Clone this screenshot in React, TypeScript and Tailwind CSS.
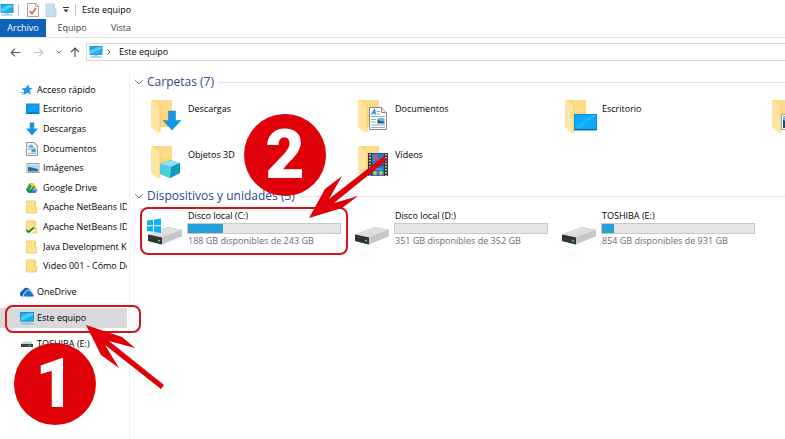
import type { ReactNode } from "react";

type IconProps = { className?: string };

const Monitor = ({ className = "" }: IconProps) => (
  <svg viewBox="0 0 14 13" className={`shrink-0 ${className}`} aria-hidden="true">
    <rect x="0.5" y="0.5" width="13" height="8.6" fill="#12b5f3" stroke="#2a8dc0" />
    <path d="M1 9V5L9 1h4v2z" fill="#4fd0fb" />
    <path d="M5 10h4v1H5z" fill="#9fc5d8" />
    <path d="M1 11.2h12v1.3H1z" fill="#7db9d8" />
  </svg>
);

const PageIcon = () => (
  <svg viewBox="0 0 12 14" className="h-3.5 w-3" aria-hidden="true">
    <path d="M.5.5h8l3 3v10H.5z" fill="#fff" stroke="#a5a5a5" />
    <path d="M8.500.5v3h3" fill="none" stroke="#a5a5a5" />
    <path d="M2.500 8l2.500 2.500L9 5" fill="none" stroke="#ee5a1f" strokeWidth="1.600" />
  </svg>
);

const NewFolder = () => (
  <svg viewBox="0 0 11 14" className="h-3.5 w-3" aria-hidden="true">
    <path d="M.5 1h8v5h2v7.500H.5z" fill="#c6e0f0" stroke="#b4d3e6" />
    <path d="M8.500 1v5" stroke="#a8cade" />
  </svg>
);

const Star = () => (
  <svg viewBox="0 0 12 12" className="size-3" aria-hidden="true">
    <path d="M7.500.5l.8 3.300 3.500.2-3 2.100 1 4.400-3.400-1.800L2.600 11l.6-3.700L.8 4.600l3.600-.5z" fill="#1c9bea" />
    <path d="M0 8.500h3M1 10.300h2" stroke="#6cc0f3" />
  </svg>
);

const Desk = () => (
  <svg viewBox="0 0 14 11" className="h-3 w-3.5" aria-hidden="true">
    <rect x=".5" y=".5" width="12.500" height="9.500" fill="#0c9df0" stroke="#1685cd" />
    <path d="M2 8l8-6" stroke="#27b0fa" />
    <path d="M1 9.500h12" stroke="#0669aa" />
  </svg>
);

const Down = () => (
  <svg viewBox="0 0 12 13" className="h-3.5 w-3" aria-hidden="true">
    <path d="M3.800 0h4.400v6H12l-6 7-6-7h3.800z" fill="#1593e6" />
  </svg>
);

const Doc = () => (
  <svg viewBox="0 0 11 13" className="h-3.5 w-3" aria-hidden="true">
    <path d="M.5.5h7l3 3v9H.5z" fill="#fff" stroke="#909598" />
    <path d="M2 5.500h7M2 7h2M2 10.500h7" stroke="#8aa4b3" />
    <path d="M3 3h3M2.500 4.300h4" stroke="#27a2db" />
    <path d="M5 6.500h4v3H5z" fill="#3fa3d0" />
  </svg>
);

const Picture = () => (
  <svg viewBox="0 0 13 10" className="h-2.5 w-3.5" aria-hidden="true">
    <rect x=".5" y=".5" width="12" height="9" fill="#fff" stroke="#9aa3a9" />
    <path d="M1.500 1.500h10v4h-10z" fill="#a9daf4" />
    <path d="M1.500 4l4 .5 6 1.500v2.500h-10z" fill="#226694" />
    <path d="M2 7h8" stroke="#2b8e7b" />
  </svg>
);

const Drive = () => (
  <svg viewBox="0 0 12 11" className="size-3" aria-hidden="true">
    <path d="M3.500 .5h4L11.500 7H7.500z" fill="#f9c82c" />
    <path d="M3.500 .5L0 7l2 3L6 4.500z" fill="#2fa35b" />
    <path d="M4 7h7.800L9.500 10.500H2z" fill="#3a7ee8" />
    <path d="M1 7l2.500 2.500L8.500 4" fill="none" stroke="#128a2c" strokeWidth="1.600" />
  </svg>
);

const MiniFolder = ({ checked = false }: { checked?: boolean }) => (
  <svg viewBox="0 0 12 13" className="h-3.5 w-3" aria-hidden="true">
    <path d="M.5.5h8.500v6.500h1.500v5.500H.5z" fill="#ffe28a" stroke="#f5cf68" />
    <path d="M9 1v6" stroke="#efc04f" />
    {checked && <path d="M0 9l3 3 5-4.500" fill="none" stroke="#fff" strokeWidth="3" />}
    {checked && <path d="M0 9l2.700 2.500L8 7" fill="none" stroke="#12852a" strokeWidth="1.700" />}
  </svg>
);

const Cloud = () => (
  <svg viewBox="0 0 14 10" className="h-2.5 w-3.5" aria-hidden="true">
    <path d="M3 9.500A2.500 2.500 0 0 1 1 5a2.500 2.500 0 0 1 2-2 3.500 3.500 0 0 1 6-1 3.500 3.500 0 0 1 2 2z" fill="#0c61b8" />
    <path d="M5.500 10A2 2 0 0 1 5 6a3.300 3.300 0 0 1 6-1.500A2.500 2.500 0 0 1 13 7a1.600 1.600 0 0 1-.3 3z" fill="#0f76d3" stroke="#fff" strokeWidth=".8" />
  </svg>
);

const MiniDisk = () => (
  <svg viewBox="0 0 12 7" className="h-2 w-3" aria-hidden="true">
    <path d="M2 1h8l2 2.500H0z" fill="#cfcfcf" />
    <path d="M0 3.500h12V6.500H0z" fill="#3c4140" />
    <path d="M7 5h3" stroke="#42b157" />
  </svg>
);

const Pin = () => (
  <svg viewBox="0 0 9 9" className="size-2.5 shrink-0" aria-hidden="true">
    <path d="M5 .3L8.700 4l-1 .7-.9-.2-1.600 1.700.1 1.600-.8.5L.8 4.600l.7-.7 1.500.1 1.800-1.700-.3-1z" fill="#8b979f" />
    <path d="M2.700 6.200L.3 8.700" stroke="#8b979f" />
  </svg>
);

const Chevron = () => (
  <svg viewBox="0 0 10 6" className="h-1.5 w-2.5" aria-hidden="true">
    <path d="M1 1l4 4 4-4" fill="none" stroke="#75808a" />
  </svg>
);

/* Open folder shared by every large tile; the badge is drawn over its lower right corner. */
const Folder = ({ children }: { children?: ReactNode }) => (
  <svg viewBox="0 0 34 36" className="h-9 w-[34px] shrink-0" aria-hidden="true">
    <path d="M1 2h20v27H8z" fill="#fbd578" />
    <path d="M8 2h13v12H9z" fill="#fddc88" />
    <path d="M0 2l9 5v27l-2 1-7-6z" fill="#ffe5a0" />
    <path d="M9 7v27" stroke="#eec568" strokeWidth=".8" />
    {children}
  </svg>
);

const DownBadge = <path d="M17.500 13h7v9.500H30l-9 9.500-9-9.500h5.500z" fill="#1796e8" stroke="#0f80cc" strokeWidth=".5" />;

const DocBadge = (
  <g>
    <path d="M11.500 9.500h12l5 5v17h-17z" fill="#fff" stroke="#85898c" />
    <path d="M23.500 9.500v5h5" fill="#e8ecee" stroke="#85898c" />
    <path d="M13.500 16.500l3-5 1 5M14.500 15h3" fill="none" stroke="#169ddd" strokeWidth="1.300" />
    <path d="M19 13.500h3M19 16h3M13 18.500h14M13 21.500h5M13 24h5M13 27h14M13 29.500h14" stroke="#8daebf" />
    <path d="M19.500 20h7v5h-7z" fill="#65bce4" />
    <path d="M19.500 22l7 2v1.500h-7z" fill="#275a77" />
  </g>
);

const DeskBadge = (
  <g>
    <rect x="9.500" y="16.500" width="22" height="15.500" fill="#0da9fa" stroke="#0b8ad2" />
    <path d="M10 29L26 17h5L14 31z" fill="#18b6ff" />
    <path d="M9.500 31.500h22" stroke="#06639e" />
  </g>
);

const CubeBadge = (
  <g>
    <path d="M9 20l10-4 10 3v10l-10 5-10-4z" fill="#20b8d6" />
    <path d="M9 20l10-4 10 3-9 4z" fill="#91e2ee" />
    <path d="M20 23l9-4v10l-10 5z" fill="#0f98bb" />
    <path d="M9 20l11 3-1 11-10-4z" fill="#4dccdf" />
  </g>
);

const FilmBadge = (
  <g>
    <path d="M10 9h20v23H10z" fill="#30373c" />
    <path d="M14 9.500h12v11H14zM14 21.500h12V32H14z" fill="#247bd3" />
    <path d="M12 10v22M28 10v22" stroke="#e5eaec" strokeWidth="1.500" strokeDasharray="1.500 1.500" />
    <path d="M15 17l3-5 2 5M21 19l4-5" stroke="#e8543b" strokeWidth="1.500" fill="none" />
    <circle cx="17" cy="29" r="2" fill="#f0b62c" />
    <circle cx="23" cy="29" r="2" fill="#f0b62c" />
    <path d="M15 25h9" stroke="#43c9ea" />
  </g>
);

const PhotoBadge = (
  <g>
    <rect x="9.500" y="16.500" width="23" height="15" fill="#fff" stroke="#9da5aa" />
    <path d="M11 18h20v12H11z" fill="#6dbce8" />
    <path d="M11 22l20 5v3H11z" fill="#174e76" />
  </g>
);

const Disk = ({ windows = false }: { windows?: boolean }) => (
  <svg viewBox="0 0 36 28" className="mt-2 h-7 w-9 shrink-0" aria-hidden="true">
    <path d="M1 16.500L21 9l14 3v6L14 26.500 1 23z" fill="#a9abac" />
    <path d="M1 16.500L21 9l14 3-20 7.500z" fill="#dedfe0" />
    <path d="M1 16.500l14 3v7L1 23z" fill="#303435" />
    <path d="M15 19.500L35 12v6l-20 8.500z" fill="#c6c7c9" />
    <path d="M11 22.500l2 .5" stroke="#2fe34c" strokeWidth="1.500" />
    {windows && <path d="M0 2.500l6-.8v5.500H0zM7 1.500l7-1v6.700H7zM0 8.200h6v5.500l-6-.7zM7 8.200h7v6.700l-7-1z" fill="#0ab5ee" />}
  </svg>
);

const quickAccess = [
  { label: "Escritorio", icon: <Desk />, pinned: true },
  { label: "Descargas", icon: <Down />, pinned: true },
  { label: "Documentos", icon: <Doc />, pinned: true },
  { label: "Imágenes", icon: <Picture />, pinned: true },
  { label: "Google Drive", icon: <Drive />, pinned: true },
  { label: "Apache NetBeans IDE", icon: <MiniFolder />, pinned: false },
  { label: "Apache NetBeans IDE", icon: <MiniFolder checked />, pinned: false },
  { label: "Java Development Kit", icon: <MiniFolder />, pinned: false },
  { label: "Video 001 - Cómo Descargar", icon: <MiniFolder />, pinned: false },
];

const folders = [
  { label: "Descargas", badge: DownBadge },
  { label: "Documentos", badge: DocBadge },
  { label: "Escritorio", badge: DeskBadge },
  { label: "Imágenes", badge: PhotoBadge },
  { label: "Objetos 3D", badge: CubeBadge },
  { label: "Vídeos", badge: FilmBadge },
];

const drives = [
  { label: "Disco local (C:)", free: "188 GB disponibles de 243 GB", used: 23, windows: true },
  { label: "Disco local (D:)", free: "351 GB disponibles de 352 GB", used: 0, windows: false },
  { label: "TOSHIBA (E:)", free: "854 GB disponibles de 931 GB", used: 8, windows: false },
];

const RootItem = ({ icon, label, active = false }: { icon: ReactNode; label: string; active?: boolean }) => (
  <button className={`flex h-5 w-full items-center gap-[3px] pl-5 text-left ${active ? "bg-[#d9d9d9]" : ""}`}>
    <span className="flex w-3.5 shrink-0 justify-center">{icon}</span>
    <span className="whitespace-nowrap">{label}</span>
  </button>
);

const SectionTitle = ({ children }: { children: ReactNode }) => (
  <h2 className="flex h-5 items-center gap-1 text-xs text-[#274a86]">
    <button className="flex items-center gap-[3px]">
      <Chevron />
      {children}
    </button>
    <span className="h-px flex-1 bg-[#e2e2e2]" />
  </h2>
);

const Step = ({ n, className }: { n: number; className: string }) => (
  <div
    className={`absolute flex size-[82px] items-center justify-center rounded-full bg-[#df000a] font-['Roboto',sans-serif] text-[68px] leading-none font-black text-white ${className}`}
  >
    {n}
  </div>
);

export default function App() {
  return (
    <div className="relative flex min-h-screen flex-col overflow-hidden bg-white font-['Open_Sans','Noto_Sans',sans-serif] text-[9px] leading-3 text-black">
      <header>
        <div className="flex h-[19px] items-center">
          <Monitor className="h-3 w-3.5" />
          <span className="ml-1 h-3 w-px bg-[#c4c4c4]" />
          <button className="ml-2" aria-label="Propiedades"><PageIcon /></button>
          <button className="ml-1.5" aria-label="Nueva carpeta"><NewFolder /></button>
          <button className="ml-1.5" aria-label="Personalizar">
            <svg viewBox="0 0 6 6" className="size-1.5" aria-hidden="true">
              <path d="M0 .5h6" stroke="#333" />
              <path d="M.5 2.500h5L3 5.500z" fill="#333" />
            </svg>
          </button>
          <span className="ml-1.5 h-3 w-px bg-[#c4c4c4]" />
          <h1 className="ml-1.5">Este equipo</h1>
        </div>
        <nav className="flex h-[19px] border-b border-[#e2e2e2]">
          <button className="w-[46px] bg-[#0f62b9] text-white">Archivo</button>
          <button className="w-[52px] text-[#3c4654]">Equipo</button>
          <button className="w-[46px] text-[#3c4654]">Vista</button>
        </nav>
        <div className="mt-[5px] flex h-[18px] items-center">
          <div className="flex w-[86px] shrink-0 items-center gap-3 pl-2.5">
            <button aria-label="Atrás">
              <svg viewBox="0 0 11 9" className="h-[9px] w-[11px]" aria-hidden="true"><path d="M10.500 4.500H1M5 .7L1.200 4.500 5 8.300" fill="none" stroke="#5c5c5c" strokeWidth="1.200" /></svg>
            </button>
            <button aria-label="Adelante">
              <svg viewBox="0 0 11 9" className="h-[9px] w-[11px]" aria-hidden="true"><path d="M.5 4.500H10M6 .7l3.800 3.800L6 8.300" fill="none" stroke="#c6c6c6" strokeWidth="1.200" /></svg>
            </button>
            <div className="flex items-center gap-2">
              <button aria-label="Recientes">
                <svg viewBox="0 0 6 4" className="h-1 w-1.5" aria-hidden="true"><path d="M.7.7L3 3 5.300.7" fill="none" stroke="#777" /></svg>
              </button>
              <button aria-label="Subir">
                <svg viewBox="0 0 10 10" className="size-2.5" aria-hidden="true"><path d="M5 10V1M1 5l4-4 4 4" fill="none" stroke="#555" strokeWidth="1.200" /></svg>
              </button>
            </div>
          </div>
          <div className="flex h-full flex-1 items-center border-y border-l border-[#dadada] pl-0.5">
            <Monitor className="h-3 w-3.5" />
            <svg viewBox="0 0 4 6" className="ml-1 h-1.5 w-1" aria-hidden="true"><path d="M.7.7L3 3 .7 5.300" fill="none" stroke="#555" /></svg>
            <button className="ml-2">Este equipo</button>
          </div>
        </div>
      </header>

      <div className="flex flex-1 pt-[11px]">
        <aside className="w-[130px] shrink-0 border-r border-[#f0f0f0] pt-2">
          <div className="w-[127px] overflow-hidden">
            <div className="grid h-49 grid-rows-10">
              <RootItem icon={<Star />} label="Acceso rápido" />
              {quickAccess.map((item, i) => (
                <button key={i} className="flex items-center pr-0.5 pl-[26px] text-left">
                  <span className="flex w-[17px] shrink-0">{item.icon}</span>
                  <span className="flex-1 overflow-hidden whitespace-nowrap">{item.label}</span>
                  {item.pinned && <Pin />}
                </button>
              ))}
            </div>
            <div className="mt-1.5 flex flex-col gap-1.5">
              <RootItem icon={<Cloud />} label="OneDrive" />
              <RootItem icon={<Monitor className="h-[13px] w-3.5" />} label="Este equipo" active />
              <RootItem icon={<MiniDisk />} label="TOSHIBA (E:)" />
            </div>
          </div>
        </aside>

        <main className="min-w-0 flex-1 overflow-hidden pl-1">
          <SectionTitle>Carpetas (7)</SectionTitle>
          <div className="mt-1.5 grid grid-cols-[repeat(4,207px)] gap-y-2.5 pl-[17px]">
            {folders.map((f) => (
              <button key={f.label} className="flex items-start gap-[3px] text-left">
                <Folder>{f.badge}</Folder>
                <span className="pt-[5px]">{f.label}</span>
              </button>
            ))}
          </div>
          <div className="mt-1.5">
            <SectionTitle>Dispositivos y unidades (3)</SectionTitle>
          </div>
          <div className="mt-1 grid grid-cols-[repeat(3,207px)] pl-[13px]">
            {drives.map((d) => (
              <button key={d.label} className="flex items-start gap-1 text-left">
                <Disk windows={d.windows} />
                <span className="flex w-[154px] flex-col">
                  <span className="px-px">{d.label}</span>
                  <span className="my-px block h-[11px] border border-[#c8c8c8] bg-[#e6e6e6]" role="progressbar" aria-label={d.label} aria-valuenow={d.used}>
                    <span className="block h-full bg-[#26a0da]" style={{ width: `${d.used}%` }} />
                  </span>
                  <span className="px-px text-[#6d6d6d]">{d.free}</span>
                </span>
              </button>
            ))}
          </div>
        </main>
      </div>

      <div className="pointer-events-none absolute inset-0">
        <div className="absolute top-[305px] left-[5px] h-7 w-[136px] rounded-lg border-2 border-[#d7101b]" />
        <div className="absolute top-[207px] left-[140px] h-12 w-[208px] rounded-lg border-2 border-[#d7101b]" />
        <Step n={1} className="top-[343px] left-[14px]" />
        <Step n={2} className="top-[114px] left-[244px]" />
        <svg viewBox="0 0 785 439" className="absolute top-0 left-0 h-[439px] w-[785px]" aria-hidden="true">
          <path d="M309 218L325 189 342 176 329 199 384 156 387 160 334 203 358 196 342 208z" fill="#df000a" />
          <path d="M86 325L122 337 135 348 109 341 164 385 161 389 105 345 119 368 101 355z" fill="#df000a" />
        </svg>
      </div>
    </div>
  );
}
